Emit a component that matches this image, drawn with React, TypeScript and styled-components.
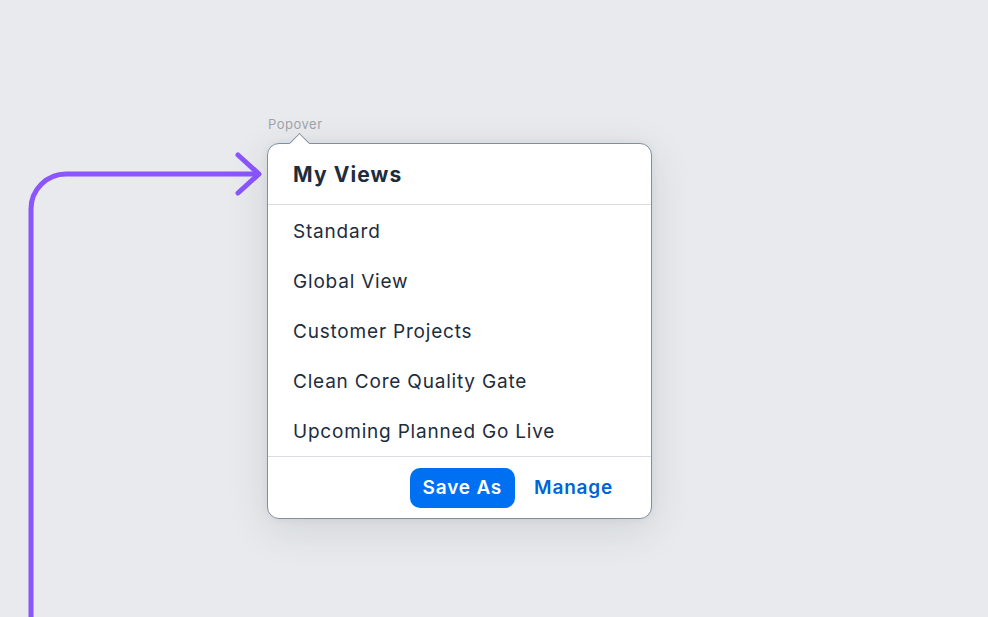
import styled, { createGlobalStyle } from "styled-components";

const GlobalStyle = createGlobalStyle`
    html, body {
        margin: 0;
        padding: 0;
    }
    body {
        font-family: Inter, "Noto Sans", "Liberation Sans", sans-serif;
        background: #e9eaed;
    }
`

const views = [
    "Standard",
    "Global View",
    "Customer Projects",
    "Clean Core Quality Gate",
    "Upcoming Planned Go Live",
];

export default function App(){
    return(
        <Canvas>
            <GlobalStyle />
            <Connector width="988" height="617" viewBox="0 0 988 617">
                <path
                    d="M31 620 V209 A35 35 0 0 1 66 174 H258"
                    fill="none"
                    stroke="#8b55ff"
                    strokeWidth="5"
                    strokeLinecap="round"
                />
                <path
                    d="M238 155 L259 174 L238 193"
                    fill="none"
                    stroke="#8b55ff"
                    strokeWidth="5"
                    strokeLinecap="round"
                    strokeLinejoin="round"
                />
            </Connector>
            <Frame>
                <FrameLabel>Popover</FrameLabel>
                <Popover>
                    <Arrow />
                    <Header>
                        <Title>My Views</Title>
                    </Header>
                    <List>
                        {views.map((v) => (
                            <Item key={v}>{v}</Item>
                        ))}
                    </List>
                    <Footer>
                        <Button $primary>Save As</Button>
                        <Button>Manage</Button>
                    </Footer>
                </Popover>
            </Frame>
        </Canvas>
    )
}

const Canvas = styled.div`
    position: relative;
    min-height: 617px;
    padding: 116px 0 0 267px;
    box-sizing: border-box;
    overflow: hidden;
`
const Connector = styled.svg`
    position: absolute;
    left: 0;
    top: 0;
`
const Frame = styled.div`
    position: relative;
    width: 385px;
    display: flex;
    flex-direction: column;
    gap: 10px;
`
const FrameLabel = styled.span`
    font-size: 13px;
    line-height: 17px;
    letter-spacing: 0.5px;
    color: #a0a4aa;
    padding-left: 1px;
`
const Popover = styled.div`
    position: relative;
    background: #fff;
    border: 1px solid #7f8fa0;
    border-radius: 12px;
    box-shadow: 0 10px 40px rgba(34, 53, 72, 0.13), 0 0 10px rgba(34, 53, 72, 0.06);
    display: flex;
    flex-direction: column;
`
const Arrow = styled.div`
    position: absolute;
    top: -8px;
    left: 24px;
    width: 14px;
    height: 14px;
    background: #fff;
    border-left: 1px solid #7f8fa0;
    border-top: 1px solid #7f8fa0;
    transform: rotate(45deg);
`
const Header = styled.div`
    height: 60px;
    display: flex;
    align-items: center;
    padding: 0 25px;
    border-bottom: 1px solid #d9dce0;
`
const Title = styled.h2`
    margin: 0;
    font-size: 21px;
    font-weight: 700;
    letter-spacing: 1.1px;
    color: #1d2d3e;
`
const List = styled.ul`
    list-style: none;
    margin: 0;
    padding: 1px 0 0;
    border-bottom: 1px solid #d9dce0;
`
const Item = styled.li`
    height: 50px;
    display: flex;
    align-items: center;
    padding: 0 25px;
    font-size: 19px;
    letter-spacing: 0.8px;
    color: #1d2d3e;
`
const Footer = styled.div`
    height: 61px;
    display: flex;
    align-items: center;
    justify-content: flex-end;
    gap: 6px;
    padding: 0 25px;
`
const Button = styled.button<{ $primary?: boolean }>`
    height: 40px;
    padding: 0 13px;
    border: none;
    border-radius: 10px;
    font-family: inherit;
    font-size: 19px;
    font-weight: 600;
    letter-spacing: 0.8px;
    cursor: pointer;
    background: ${(p) => (p.$primary ? "#0070f2" : "transparent")};
    color: ${(p) => (p.$primary ? "#fff" : "#0064d9")};
`
